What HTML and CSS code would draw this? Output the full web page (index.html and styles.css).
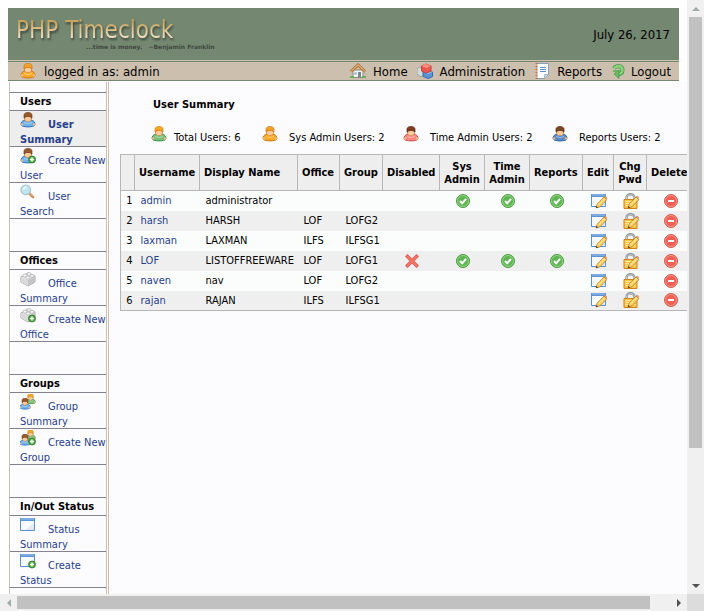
FILE: index.html
```html
<!DOCTYPE html>
<html lang="en">
<head>
    <meta charset="UTF-8">
    <meta name="viewport" content="width=device-width, initial-scale=1.0">
    <title>PHP Timeclock</title>
    <link rel="stylesheet" href="styles.css">
</head>
<body>
    <svg class="sprites" aria-hidden="true">
        <symbol id="person" viewBox="0 0 16 16">
            <path class="coat" d="M1 13C1 10 2.500 8.500 5 8h6c2.500 .500 4 2 4 5-1 2.500-13 2.500-14 0z" stroke-width="1"/>
            <path d="M4 10.500q4 2 8 0" fill="none" stroke="#fff" stroke-opacity=".4"/>
            <circle cx="2" cy="12.500" r="1.200" fill="#f2b98b"/><circle cx="14" cy="12.500" r="1.200" fill="#f2b98b"/>
            <path d="M4.500 4h7v3c0 3.500-7 3.500-7 0z" fill="#fbcb9b" stroke="#c88648" stroke-width=".7"/>
            <path class="hair" d="M4 6V3c0-3.500 8-3.500 8 0v3h-.8l-.7-1.500h-5L4.800 6z" stroke-width=".7"/>
        </symbol>
        <symbol id="plus" viewBox="0 0 16 16">
            <circle cx="12" cy="11.500" r="3.500" fill="#4fa83d" stroke="#2f7a2a" stroke-width=".8"/>
            <path d="M12 9.500v4M10 11.500h4" stroke="#fff" stroke-width="1.500"/>
        </symbol>
        <symbol id="brick" viewBox="0 0 16 16">
            <path d="M1 6l7-4 7 3v6l-7 4-7-4z" fill="#e6e6e6" stroke="#a5a5a5"/>
            <path d="M1 6l7 3v6l-7-4z" fill="#dadada"/>
            <path d="M8 9l7-4v6l-7 4z" fill="#c4c4c4"/>
            <g fill="#f6f6f6" stroke="#b0b0b0" stroke-width=".7"><ellipse cx="5" cy="4.500" rx="2" ry="1.500"/><ellipse cx="9" cy="3" rx="2" ry="1.500"/><ellipse cx="8" cy="6.500" rx="2" ry="1.500"/><ellipse cx="12" cy="4.800" rx="2" ry="1.500"/></g>
        </symbol>
        <symbol id="window" viewBox="0 0 16 16">
            <path d="M.5 1.500h14v12H.5z" fill="#f8fafd" stroke="#5b8fc9"/>
            <path d="M5 13l9-7v7z" fill="#e2eaf4"/>
            <path d="M0 1h15v3H0z" fill="#5d94d6"/><path d="M1 2h13" stroke="#9cc3ee"/>
        </symbol>
        <symbol id="pencil" viewBox="0 0 16 16">
            <path d="M5 15l1.200-4L13 4l3 2.500L9 13.800z" fill="#fad160" stroke="#b97c24" stroke-width=".8"/>
            <path d="M7.500 12L14 5.500" stroke="#fff0b0"/>
            <path d="M13 4l1-1 3 2.500-1.200 1.200z" fill="#e9a27a" stroke="#b9763c" stroke-width=".5"/>
            <path d="M5 15l.5-2 1.500 1.400z" fill="#342a22"/>
        </symbol>
        <symbol id="search" viewBox="0 0 16 16">
            <path d="M9.500 9.500l3.500 3.500" stroke="#c98a50" stroke-width="2.600" stroke-linecap="round"/>
            <path d="M9.500 9l3.500 3.500" stroke="#f0c896" stroke-linecap="round"/>
            <circle cx="5.800" cy="5.800" r="4.800" fill="#bfe6f3" stroke="#a9c3cd" stroke-width="1.200"/>
            <path d="M3 5.500Q4 3 6.500 2.800" fill="none" stroke="#fff" stroke-width="1.300"/>
        </symbol>
        <symbol id="home" viewBox="0 0 16 16">
            <path d="M3 7h10v7.500H3z" fill="#f2f2ee" stroke="#888"/>
            <path d="M1 8.500L8 2l7 6.500" fill="none" stroke="#a0642e" stroke-width="2.800"/>
            <path d="M1 8.500L8 2l7 6.500" fill="none" stroke="#e5ad68" stroke-width="1.400"/>
            <path d="M4.500 9.500h2v2h-2z" fill="#77a4c5"/><path d="M8 9h3v5.500H8z" fill="#7c8890"/>
            <path d="M0 14h4M12 14h4" stroke="#6fae5a" stroke-width="2"/>
        </symbol>
        <symbol id="bricks" viewBox="0 0 16 16">
            <path d="M0 6l3-2 4 2v6l-3 2-4-3z" fill="#d5dcd8" stroke="#96a39c"/>
            <path d="M6 9l4-2 5.500 2v4.500l-4 2L6 13.500z" fill="#5a92d6" stroke="#3269ac"/>
            <path d="M6 9l5.500 2 4-2L10 7z" fill="#8fbdf0"/>
            <path d="M4.500 3l4.500-2 5 2v5L9.500 10l-5-2z" fill="#ea5852" stroke="#c63e3a"/>
            <path d="M4.500 3l5 2L14 3 9 1z" fill="#ff9286"/>
            <path d="M7 2.500V1h2.500v1.500M10 3V1.500h2V3" fill="#ff7c72"/>
        </symbol>
        <symbol id="report" viewBox="0 0 16 16">
            <path d="M2.500 .5h12v11l-4 4h-8z" fill="#fafcff" stroke="#8aa0b8"/>
            <path d="M10.500 15.500v-4h4z" fill="#d5dfec" stroke="#8aa0b8" stroke-width=".7"/>
            <path d="M1.500 0h2v16h-2z" fill="#b5754f"/><path d="M1 2h3M1 5h3M1 8h3M1 11h3M1 14h3" stroke="#e9dccf"/>
            <path d="M6 4.500h6M6 6.500h6M6 8.500h6" stroke="#5d91d3" stroke-width="1.200"/>
        </symbol>
        <symbol id="logout" viewBox="0 0 16 16">
            <path d="M3 5.500C5 2 11.500 2.500 11.500 7c0 3-2 4-4.500 4" fill="none" stroke="#43964a" stroke-width="4"/>
            <path d="M3 5.500C5 2 11.500 2.500 11.500 7c0 3-2 4-4.500 4" fill="none" stroke="#8fd47c" stroke-width="2.400"/>
            <path d="M8 7v8.500L3 11z" fill="#6cc05a" stroke="#43964a" stroke-width=".8"/>
            <path d="M2 8h5" stroke="#5fae52" stroke-width="1.600"/>
        </symbol>
        <symbol id="yes" viewBox="0 0 16 16">
            <circle cx="8" cy="8" r="6.500" fill="#5eb552" stroke="#4a9a42"/>
            <circle cx="8" cy="8" r="5.500" fill="none" stroke="#a2dc94" stroke-width=".8"/>
            <path d="M5 8l2.200 2.300L11 5.800" fill="none" stroke="#fff" stroke-width="2"/>
        </symbol>
        <symbol id="no" viewBox="0 0 16 16">
            <path d="M3.500 3.500l9 9M12.500 3.500l-9 9" stroke="#dc5348" stroke-width="3.400" stroke-linecap="square"/>
            <path d="M3.500 3.500l9 9M12.500 3.500l-9 9" stroke="#f57a6b" stroke-width="1.800" stroke-linecap="square"/>
        </symbol>
        <symbol id="lock" viewBox="0 0 16 16">
            <path d="M3.500 7V5c0-5 8-5 8 0v2" fill="none" stroke="#8b9296" stroke-width="2.400"/>
            <path d="M3.500 7V5c0-4.500 8-4.500 8 0" fill="none" stroke="#d5dadc" stroke-width=".8"/>
            <path d="M1 6.500h13v9H1z" fill="#fbc64a" stroke="#cf811a"/>
            <path d="M2.500 8.500h10M2.500 10.500h10M2.500 12.500h10" stroke="#ffe69b"/>
        </symbol>
        <symbol id="delete" viewBox="0 0 16 16">
            <circle cx="8" cy="8" r="6.500" fill="#ee5f54" stroke="#cf5b4c"/>
            <circle cx="8" cy="8" r="5.500" fill="none" stroke="#f9a196" stroke-width=".8"/>
            <path d="M5 8h6" stroke="#fff" stroke-width="2"/>
        </symbol>
    </svg>

    <div class="window">
        <div class="page">
            <header class="banner">
                <div class="logo">
                    <h1>PHP Timeclock</h1>
                    <p>...time is money. &nbsp; ~Benjamin Franklin</p>
                </div>
                <div class="date">July 26, 2017</div>
            </header>
            <div class="topbar">
                <div class="whoami"><svg class="icon orange"><use href="#person"/></svg>logged in as: admin</div>
                <nav class="topnav">
                    <a href="#"><svg class="icon"><use href="#home"/></svg>Home</a>
                    <a href="#"><svg class="icon"><use href="#bricks"/></svg>Administration</a>
                    <a href="#"><svg class="icon"><use href="#report"/></svg>Reports</a>
                    <a href="#" class="logout"><svg class="icon"><use href="#logout"/></svg>Logout</a>
                </nav>
            </div>
            <div class="content">
                <nav class="sidebar">
                    <section>
                        <h2>Users</h2>
                        <a href="#" class="current"><svg class="icon blue"><use href="#person"/></svg>User Summary</a>
                        <a href="#"><svg class="icon blue"><use href="#person"/><use href="#plus"/></svg>Create New User</a>
                        <a href="#"><svg class="icon"><use href="#search"/></svg>User Search</a>
                    </section>
                    <section>
                        <h2>Offices</h2>
                        <a href="#"><svg class="icon"><use href="#brick"/></svg>Office Summary</a>
                        <a href="#"><svg class="icon"><use href="#brick"/><use href="#plus"/></svg>Create New Office</a>
                    </section>
                    <section>
                        <h2>Groups</h2>
                        <a href="#"><svg class="icon" viewBox="0 0 16 16"><use class="green" href="#person" x="5" y="-1" width="11" height="12"/><use class="blue" href="#person" x="-1" y="4" width="12" height="12"/></svg>Group Summary</a>
                        <a href="#"><svg class="icon" viewBox="0 0 16 16"><use class="green" href="#person" x="5" y="-1" width="11" height="12"/><use class="blue" href="#person" x="-1" y="4" width="12" height="12"/><use href="#plus"/></svg>Create New Group</a>
                    </section>
                    <section>
                        <h2>In/Out Status</h2>
                        <a href="#"><svg class="icon"><use href="#window"/></svg>Status Summary</a>
                        <a href="#"><svg class="icon"><use href="#window"/><use href="#plus"/></svg>Create Status</a>
                    </section>
                </nav>
                <main class="main">
                    <h2>User Summary</h2>
                    <ul class="totals">
                        <li><svg class="icon green"><use href="#person"/></svg>Total Users: 6</li>
                        <li><svg class="icon orange"><use href="#person"/></svg>Sys Admin Users: 2</li>
                        <li><svg class="icon red"><use href="#person"/></svg>Time Admin Users: 2</li>
                        <li><svg class="icon navy"><use href="#person"/></svg>Reports Users: 2</li>
                    </ul>
                    <table class="users">
                        <colgroup>
                            <col class="c-num"><col class="c-user"><col class="c-name"><col class="c-office"><col class="c-group"><col class="c-disabled"><col class="c-admin"><col class="c-admin"><col class="c-reports"><col class="c-edit"><col class="c-pwd"><col class="c-delete">
                        </colgroup>
                        <thead>
                            <tr>
                                <th></th>
                                <th>Username</th>
                                <th>Display Name</th>
                                <th>Office</th>
                                <th>Group</th>
                                <th>Disabled</th>
                                <th class="mid">Sys Admin</th>
                                <th class="mid">Time Admin</th>
                                <th>Reports</th>
                                <th>Edit</th>
                                <th class="mid">Chg Pwd</th>
                                <th>Delete</th>
                            </tr>
                        </thead>
                        <tbody id="userRows"></tbody>
                    </table>
                </main>
            </div>
        </div>
        <div class="scroll vertical">
            <button type="button" class="off" aria-label="Scroll up"><svg viewBox="0 0 8 4"><path d="M0 4l4-4 4 4z"/></svg></button>
            <div class="track"><div class="thumb"></div></div>
            <button type="button" aria-label="Scroll down"><svg viewBox="0 0 8 4"><path d="M0 0h8L4 4z"/></svg></button>
        </div>
        <div class="scroll horizontal">
            <button type="button" class="off" aria-label="Scroll left"><svg viewBox="0 0 4 8"><path d="M4 0v8L0 4z"/></svg></button>
            <div class="track"><div class="thumb"></div></div>
            <button type="button" aria-label="Scroll right"><svg viewBox="0 0 4 8"><path d="M0 0l4 4-4 4z"/></svg></button>
        </div>
        <div class="corner"></div>
    </div>

    <script>
        // username, display name, office, group, disabled, has admin rights
        const users = [
            ['admin', 'administrator', '', '', false, true],
            ['harsh', 'HARSH', 'LOF', 'LOFG2', false, false],
            ['laxman', 'LAXMAN', 'ILFS', 'ILFSG1', false, false],
            ['LOF', 'LISTOFFREEWARE', 'LOF', 'LOFG1', true, true],
            ['naven', 'nav', 'LOF', 'LOFG2', false, false],
            ['rajan', 'RAJAN', 'ILFS', 'ILFSG1', false, false]
        ];

        function icon(...names) {
            return '<svg class="icon">' + names.map(n => `<use href="#${n}"/>`).join('') + '</svg>';
        }

        function action(label, ...names) {
            return `<td class="mid"><a href="#" aria-label="${label}">${icon(...names)}</a></td>`;
        }

        document.getElementById('userRows').innerHTML = users.map((u, i) => {
            const right = `<td class="mid">${u[5] ? icon('yes') : ''}</td>`;
            return `<tr>
                <td class="num">${i + 1}</td>
                <td><a href="#">${u[0]}</a></td>
                <td>${u[1]}</td>
                <td>${u[2]}</td>
                <td>${u[3]}</td>
                <td class="mid">${u[4] ? icon('no') : ''}</td>
                ${right}${right}${right}
                ${action('Edit ' + u[0], 'window', 'pencil')}
                ${action('Change password of ' + u[0], 'lock', 'pencil')}
                ${action('Delete ' + u[0], 'delete')}
            </tr>`;
        }).join('');
    </script>
</body>
</html>
```
FILE: styles.css
```css
* {
    box-sizing: border-box;
}
body {
    margin: 0;
    font-family: "DejaVu Sans Condensed", "Noto Sans", sans-serif;
    font-size: 11px;
    line-height: 15px;
    color: #000;
    background-color: #fff;
}
h1, h2, p, ul {
    margin: 0;
    padding: 0;
}
h2 {
    font-size: 11px;
}
a {
    color: #27408b;
    text-decoration: none;
}
.sprites {
    display: none;
}
.icon {
    width: 16px;
    height: 16px;
    flex: none;
}

/* clothes and hair of the person icon */
.coat {
    fill: var(--coat);
    stroke: var(--edge);
}
.hair {
    fill: var(--hair);
    stroke: var(--hair-edge);
}
.blue {
    --coat: #6db0ef;
    --edge: #2f6fb5;
    --hair: #98592c;
    --hair-edge: #6b3a18;
}
.navy {
    --coat: #5b8bca;
    --edge: #315d98;
    --hair: #7d4420;
    --hair-edge: #552a10;
}
.green {
    --coat: #78c077;
    --edge: #3f8a43;
    --hair: #f5a71f;
    --hair-edge: #cf7f12;
}
.orange {
    --coat: #f8ab22;
    --edge: #cc7711;
    --hair: #f3a32a;
    --hair-edge: #c87515;
}
.red {
    --coat: #f98780;
    --edge: #cf4c48;
    --hair: #7d3c20;
    --hair-edge: #552410;
}

.window {
    display: grid;
    grid-template-columns: minmax(0, 1fr) 17px;
    grid-template-rows: minmax(0, 1fr) 17px;
    height: 100vh;
}
.page {
    display: flex;
    flex-direction: column;
    overflow: hidden;
    padding: 8px 8px 0;
}
.banner {
    display: flex;
    justify-content: space-between;
    align-items: center;
    height: 52px;
    flex: none;
    padding: 0 9px 0 8px;
    background-color: #748771;
}
.logo h1 {
    font-size: 24px;
    font-weight: normal;
    line-height: 26px;
    color: transparent;
    background: linear-gradient(#c9a45c 20%, #f4e6cc 85%);
    -webkit-background-clip: text;
    background-clip: text;
    filter: drop-shadow(1px 2px 1px #3a4438);
}
.logo p {
    padding-left: 70px;
    font-family: "DejaVu Sans", sans-serif;
    font-size: 6px;
    font-weight: bold;
    line-height: 8px;
    color: #3f4a3e;
}
.date {
    font-size: 13px;
}
.topbar {
    display: flex;
    justify-content: space-between;
    align-items: center;
    height: 20px;
    flex: none;
    margin-top: 1px;
    padding: 0 8px 0 12px;
    font-size: 13px;
    background-color: #cdbfae;
    border-top: 1px solid #748771;
    border-bottom: 1px solid #748771;
    box-shadow: 0 -1px #cdbfae;
}
.whoami, .topnav, .topnav a {
    display: flex;
    align-items: center;
}
.whoami {
    gap: 8px;
}
.topnav {
    gap: 9px;
}
.topnav a {
    gap: 7px;
    color: #000;
}
.topnav .logout {
    gap: 4px;
}

.content {
    display: flex;
    flex: 1;
    min-height: 0;
    margin: 0 -8px;
    padding: 1px 0 0 9px;
    background: linear-gradient(to right, #fff 9px, #fcfcfe 9px);
}
.sidebar {
    display: flex;
    flex-direction: column;
    gap: 32px;
    width: 98px;
    flex: none;
    padding-top: 10px;
    border-left: 1px solid #cdbfae;
    border-right: 1px solid #cdbfae;
}
.sidebar section {
    border-top: 1px solid #85818f;
}
.sidebar h2 {
    padding: 1px 0 1px 10px;
    border-bottom: 1px solid #85818f;
}
.sidebar a {
    display: block;
    height: 36px;
    padding: 1px 0 0 10px;
    border-bottom: 1px solid #85818f;
}
.sidebar .icon {
    margin-right: 12px;
}
.sidebar .current {
    font-weight: bold;
    background-color: #eee;
}
.main {
    flex: 1;
    margin-left: 1px;
    padding: 15px 0 0 11px;
    border-left: 1px solid #cdbfae;
}
.main h2 {
    padding-left: 33px;
}
.totals {
    display: grid;
    grid-template-columns: 111px 141px 149px auto;
    padding: 14px 0 9px 31px;
    list-style: none;
}
.totals li {
    display: flex;
    align-items: flex-end;
    gap: 11px;
    white-space: nowrap;
}
.totals li:first-child {
    gap: 7px;
}
.totals .icon {
    margin-bottom: 3px;
}

.users {
    width: 575px;
    table-layout: fixed;
    border-collapse: collapse;
    border: 1px solid #b7b7b7;
    background-color: #fbfdfc;
}
.users th {
    height: 36px;
    padding: 0 4px;
    line-height: 13px;
    text-align: left;
    background-color: #eee;
    border: 1px solid #b7b7b7;
}
.users td {
    height: 20px;
    padding: 0 0 0 6px;
    white-space: nowrap;
}
.users tbody tr:nth-child(even) {
    background-color: #efefef;
}
.users .mid {
    padding: 0;
    text-align: center;
}
.users td.mid {
    padding-left: 2px;
}
.users .num {
    padding: 0 2px 0 0;
    text-align: right;
}
.users .icon {
    display: block;
    margin: 0 auto;
    overflow: visible;
}
.c-num { width: 14px; }
.c-user { width: 65px; }
.c-name { width: 98px; }
.c-office { width: 42px; }
.c-group { width: 43px; }
.c-disabled { width: 57px; }
.c-admin { width: 45px; }
.c-reports { width: 53px; }
.c-edit { width: 31px; }
.c-pwd { width: 33px; }
.c-delete { width: 48px; }

.scroll {
    display: flex;
    background-color: #f0f0f0;
}
.vertical {
    flex-direction: column;
    grid-column: 2;
    grid-row: 1;
}
.horizontal {
    grid-column: 1;
    grid-row: 2;
}
.corner {
    background-color: #dcdcdc;
}
.scroll button {
    display: flex;
    align-items: center;
    justify-content: center;
    width: 17px;
    height: 17px;
    flex: none;
    padding: 0;
    border: 0;
    background: none;
}
.scroll svg {
    width: 8px;
    height: 8px;
    fill: #505050;
}
.scroll .off svg {
    fill: #9fada8;
}
.track {
    flex: 1;
}
.thumb {
    background-color: #c1c1c1;
}
.vertical .thumb {
    height: 77%;
    margin: 0 2px;
}
.horizontal .thumb {
    width: 97%;
    height: 13px;
    margin: 2px 0;
}
```
